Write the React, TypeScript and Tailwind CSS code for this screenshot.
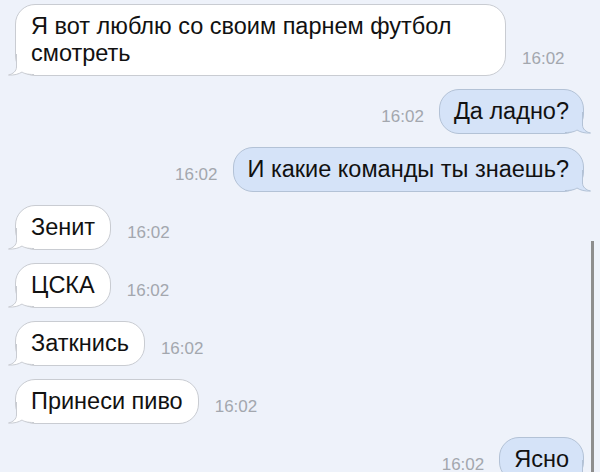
const FONT = { fontFamily: '"Liberation Sans", Arial, sans-serif' };

type Msg = { text: string; mine?: boolean; wide?: boolean };

const MESSAGES: Msg[] = [
  { text: "Я вот люблю со своим парнем футбол смотреть", wide: true },
  { text: "Да ладно?", mine: true },
  { text: "И какие команды ты знаешь?", mine: true },
  { text: "Зенит" },
  { text: "ЦСКА" },
  { text: "Заткнись" },
  { text: "Принеси пиво" },
  { text: "Ясно", mine: true },
];

function Tail({ mine }: { mine?: boolean }) {
  const fill = mine ? "#d5e3f8" : "#ffffff";
  const stroke = mine ? "#b3c2d6" : "#c9ccd2";
  return (
    <svg
      width="26"
      height="22"
      viewBox="0 0 26 22"
      className={
        mine
          ? "absolute right-[-8px] bottom-[-1px] scale-x-[-1]"
          : "absolute left-[-8px] bottom-[-1px]"
      }
    >
      <path
        d="M8.5 0 V13 C8.5 17 5 20 0.5 21 C6 21.5 11 20 14 18 C16 19.5 19 20.5 26 20.5 V0 Z"
        fill={fill}
      />
      <path
        d="M8.5 0 V13 C8.5 17 5 20 0.5 21 C6 21.5 11 20 14 18 C16 19.5 19 20.5 26 20.5"
        fill="none"
        stroke={stroke}
        strokeWidth="1"
      />
    </svg>
  );
}

function Time() {
  return <span className="mb-[7px] shrink-0 text-[17px] leading-[20px] text-[#a3a7ae]">16:02</span>;
}

function Bubble({ msg }: { msg: Msg }) {
  return (
    <div
      className={[
        "relative rounded-[20px] border py-[8px] text-[23.5px] leading-[27px] text-[#111111]",
        msg.mine ? "border-[#b3c2d6] bg-[#d5e3f8] px-[14px]" : "border-[#c9ccd2] bg-white px-[15px]",
        msg.wide ? "w-[491px]" : "",
      ].join(" ")}
    >
      <Tail mine={msg.mine} />
      <span className="relative">{msg.text}</span>
    </div>
  );
}

export default function App() {
  return (
    <div className="relative h-[472px] w-[600px] overflow-hidden bg-[#eef2fa]" style={FONT}>
      <div className="flex flex-col gap-[13px] pt-[4px]">
        {MESSAGES.map((m, i) =>
          m.mine ? (
            <div key={i} className="flex items-end justify-end gap-[15px] pr-[16px]">
              <Time />
              <Bubble msg={m} />
            </div>
          ) : (
            <div key={i} className="flex items-end gap-[16px] pl-[15px]">
              <Bubble msg={m} />
              <Time />
            </div>
          )
        )}
      </div>
      <div className="absolute bottom-0 right-[6px] top-[241px] w-[3px] bg-[#8e8e8e]" />
    </div>
  );
}
